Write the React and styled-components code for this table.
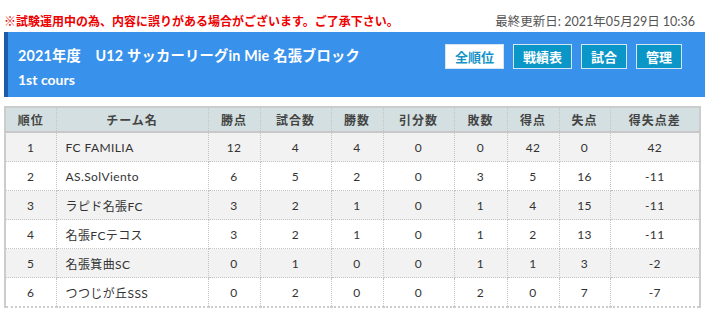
import styled, { createGlobalStyle } from "styled-components"

const Global = createGlobalStyle`
  body {
    margin: 0;
    background: #fff;
    font-family: Lato, "Noto Sans CJK JP", sans-serif;
  }
`

const Page = styled.div`
  padding: 0 0 0 4px;
  width: 701px;
`

const NoticeRow = styled.div`
  display: flex;
  justify-content: space-between;
  align-items: center;
  height: 20px;
  padding: 10px 10px 2px 0;
  font-size: 12px;
`

const Notice = styled.span`
  color: #ee0000;
  font-weight: bold;
`

const Updated = styled.span`
  color: #555;
  font-size: 12.5px;
`

const Banner = styled.div`
  height: 65px;
  background: #3891ea;
  border-left: 4px solid #1a5ea8;
  padding: 0 23px 0 10px;
  box-sizing: border-box;
  color: #fff;
  font-weight: bold;
  display: flex;
  flex-direction: column;
`

const BannerTop = styled.div`
  display: flex;
  justify-content: space-between;
  align-items: center;
  height: 42px;
  padding-top: 1px;
`

const Title = styled.h1`
  margin: 0;
  font-size: 14.3px;
  font-weight: bold;
  letter-spacing: 0.2px;
`

const Sub = styled.div`
  font-size: 14px;
  line-height: 16px;
  margin-top: -3px;
`

const Buttons = styled.div`
  display: flex;
  gap: 9px;
  padding-top: 5px;
`

const Btn = styled.button`
  height: 25px;
  padding: 0 9px;
  border: 1px solid #d5e6f2;
  background: ${({ $active }) => ($active ? "#fff" : "#0b96c8")};
  color: ${({ $active }) => ($active ? "#1593c7" : "#fff")};
  font-family: inherit;
  font-size: 13px;
  font-weight: bold;
  letter-spacing: 0;
`

const Table = styled.table`
  margin-top: 9px;
  width: 695px;
  border-collapse: collapse;
  border-left: 2px solid #ccc;
  border-right: 2px solid #ccc;
  border-bottom: 2px dotted #ccc;
  font-size: 12px;
  color: #333;
  table-layout: fixed;
`

const Th = styled.th`
  height: 23px;
  padding: 0;
  background: #d3dfe0;
  color: #444;
  font-weight: bold;
  border: 1px dotted #c4c4c4;
  border-top: 2px solid #ccc;
  border-bottom: 2px solid #c8c8c8;
  letter-spacing: 1px;
`

const Tr = styled.tr`
  background: ${({ $odd }) => ($odd ? "#f2f2f2" : "#fff")};
`

const Td = styled.td`
  height: 28px;
  padding: 0;
  border: 1px dotted #c4c4c4;
  text-align: ${({ $left }) => ($left ? "left" : "center")};
  padding-left: ${({ $left }) => ($left ? "9px" : "0")};
  letter-spacing: 0.4px;
`

const cols = [51, 152, 52, 71, 52, 71, 53, 52, 51, 90]
const heads = ["順位", "チーム名", "勝点", "試合数", "勝数", "引分数", "敗数", "得点", "失点", "得失点差"]

const rows = [
  [1, "FC FAMILIA", 12, 4, 4, 0, 0, 42, 0, 42],
  [2, "AS.SolViento", 6, 5, 2, 0, 3, 5, 16, -11],
  [3, "ラピド名張FC", 3, 2, 1, 0, 1, 4, 15, -11],
  [4, "名張FCテコス", 3, 2, 1, 0, 1, 2, 13, -11],
  [5, "名張箕曲SC", 0, 1, 0, 0, 1, 1, 3, -2],
  [6, "つつじが丘SSS", 0, 2, 0, 0, 2, 0, 7, -7],
]

export default function App() {
  return (
    <Page>
      <Global />
      <NoticeRow>
        <Notice>※試験運用中の為、内容に誤りがある場合がございます。ご了承下さい。</Notice>
        <Updated>最終更新日: 2021年05月29日 10:36</Updated>
      </NoticeRow>
      <Banner>
        <BannerTop>
          <Title>2021年度　U12 サッカーリーグin Mie 名張ブロック</Title>
          <Buttons>
            <Btn $active>全順位</Btn>
            <Btn>戦績表</Btn>
            <Btn>試合</Btn>
            <Btn>管理</Btn>
          </Buttons>
        </BannerTop>
        <Sub>1st cours</Sub>
      </Banner>
      <Table>
        <colgroup>
          {cols.map((w, i) => (
            <col key={i} style={{ width: w }} />
          ))}
        </colgroup>
        <thead>
          <tr>
            {heads.map((h) => (
              <Th key={h}>{h}</Th>
            ))}
          </tr>
        </thead>
        <tbody>
          {rows.map((r, i) => (
            <Tr key={i} $odd={i % 2 === 0}>
              {r.map((c, j) => (
                <Td key={j} $left={j === 1}>
                  {c}
                </Td>
              ))}
            </Tr>
          ))}
        </tbody>
      </Table>
    </Page>
  )
}
